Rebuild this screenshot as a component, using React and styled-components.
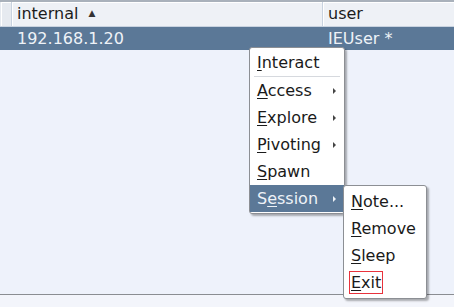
import styled, { createGlobalStyle } from "styled-components";

const Global = createGlobalStyle`
  html, body {
    margin: 0;
    padding: 0;
    background: #f3f5fb;
  }
  #root {
    width: 454px;
    height: 307px;
    position: relative;
    overflow: hidden;
    font-family: "DejaVu Sans", sans-serif;
    font-size: 16px;
  }
`;

const Page = styled.div`
  display: flex;
  flex-direction: column;
  height: 307px;
`;

const Table = styled.div`
  flex: 0 0 295px;
  display: flex;
  flex-direction: column;
  background: #eef2fb;
  border-top: 2px solid #a9b1bb;
  border-bottom: 1px solid #8a8d92;
  box-sizing: border-box;
`;

const HeaderRow = styled.div`
  display: grid;
  grid-template-columns: 11px 311px 1fr;
  height: 24px;
  background: #eef1f6;
  border-bottom: 1px solid #c9d3e0;
`;

const HeadCell = styled.div`
  display: flex;
  align-items: center;
  padding-left: 5px;
  padding-bottom: 1px;
  color: #1c1c1c;
  border-left: 1px solid ${(p) => (p.$first ? "transparent" : "#c9d3e0")};
  box-shadow: inset 1px 1px 0 #ffffff;
  background: ${(p) => (p.$first ? "#e6eaf0" : "#eef1f6")};
`;

const SortArrow = styled.span`
  font-size: 9px;
  margin-left: 10px;
  margin-top: -2px;
  color: #333;
`;

const DataRow = styled.div`
  display: grid;
  grid-template-columns: 11px 311px 1fr;
  height: 23px;
  background: #5b7897;
  color: #eef2f7;
`;

const DataCell = styled.div`
  display: flex;
  align-items: center;
  padding-left: 6px;
`;

const Footer = styled.div`
  flex: 1;
  background: #f3f5fb;
`;

const Menu = styled.div`
  position: absolute;
  left: ${(p) => p.$x}px;
  top: ${(p) => p.$y}px;
  width: ${(p) => p.$w}px;
  background: #ffffff;
  border: 1px solid #8c8f94;
  border-radius: 3px;
  box-shadow: 2px 2px 2px rgba(0, 0, 0, 0.3);
  padding: ${(p) => p.$pad}px 0;
  box-sizing: border-box;
  display: flex;
  flex-direction: column;
`;

const Item = styled.div`
  height: 27px;
  display: flex;
  align-items: center;
  padding-left: 7px;
  padding-right: 8px;
  justify-content: space-between;
  color: ${(p) => (p.$active ? "#eef2f7" : "#1a1a1a")};
  background: ${(p) => (p.$active ? "#5b7897" : "transparent")};
`;

const Label = styled.span`
  padding: 0 1px;
  line-height: 21px;
  border: 1px solid ${(p) => (p.$focus ? "#e8323c" : "transparent")};
  margin-left: -2px;
`;

const Key = styled.u`
  text-decoration-thickness: 1px;
  text-underline-offset: 2px;
`;

const Caret = styled.span`
  width: 0;
  height: 0;
  border-top: 3px solid transparent;
  border-bottom: 3px solid transparent;
  border-left: 3px solid ${(p) => (p.$light ? "#eef2f7" : "#444")};
`;

const Separator = styled.div`
  height: 1px;
  margin: 0 4px;
  background: #d6d9de;
`;

const MenuItem = ({ pre = "", k, post, sub, active, focus }) => (
  <Item $active={active}>
    <Label $focus={focus}>
      {pre}
      <Key>{k}</Key>
      {post}
    </Label>
    {sub && <Caret $light={active} />}
  </Item>
);

export default function App() {
  return (
    <>
      <Global />
      <Page>
        <Table>
          <HeaderRow>
            <HeadCell $first />
            <HeadCell>
              internal<SortArrow>▲</SortArrow>
            </HeadCell>
            <HeadCell>user</HeadCell>
          </HeaderRow>
          <DataRow>
            <DataCell />
            <DataCell>192.168.1.20</DataCell>
            <DataCell>IEUser *</DataCell>
          </DataRow>
        </Table>
        <Footer />
      </Page>

      <Menu $x={249} $y={47} $w={96} $pad={1}>
        <MenuItem k="I" post="nteract" />
        <Separator />
        <MenuItem k="A" post="ccess" sub />
        <MenuItem k="E" post="xplore" sub />
        <MenuItem k="P" post="ivoting" sub />
        <MenuItem k="S" post="pawn" />
        <MenuItem pre="S" k="e" post="ssion" sub active />
      </Menu>

      <Menu $x={343} $y={185} $w={84} $pad={2}>
        <MenuItem k="N" post="ote..." />
        <MenuItem k="R" post="emove" />
        <MenuItem k="S" post="leep" />
        <MenuItem k="E" post="xit" focus />
      </Menu>
    </>
  );
}
